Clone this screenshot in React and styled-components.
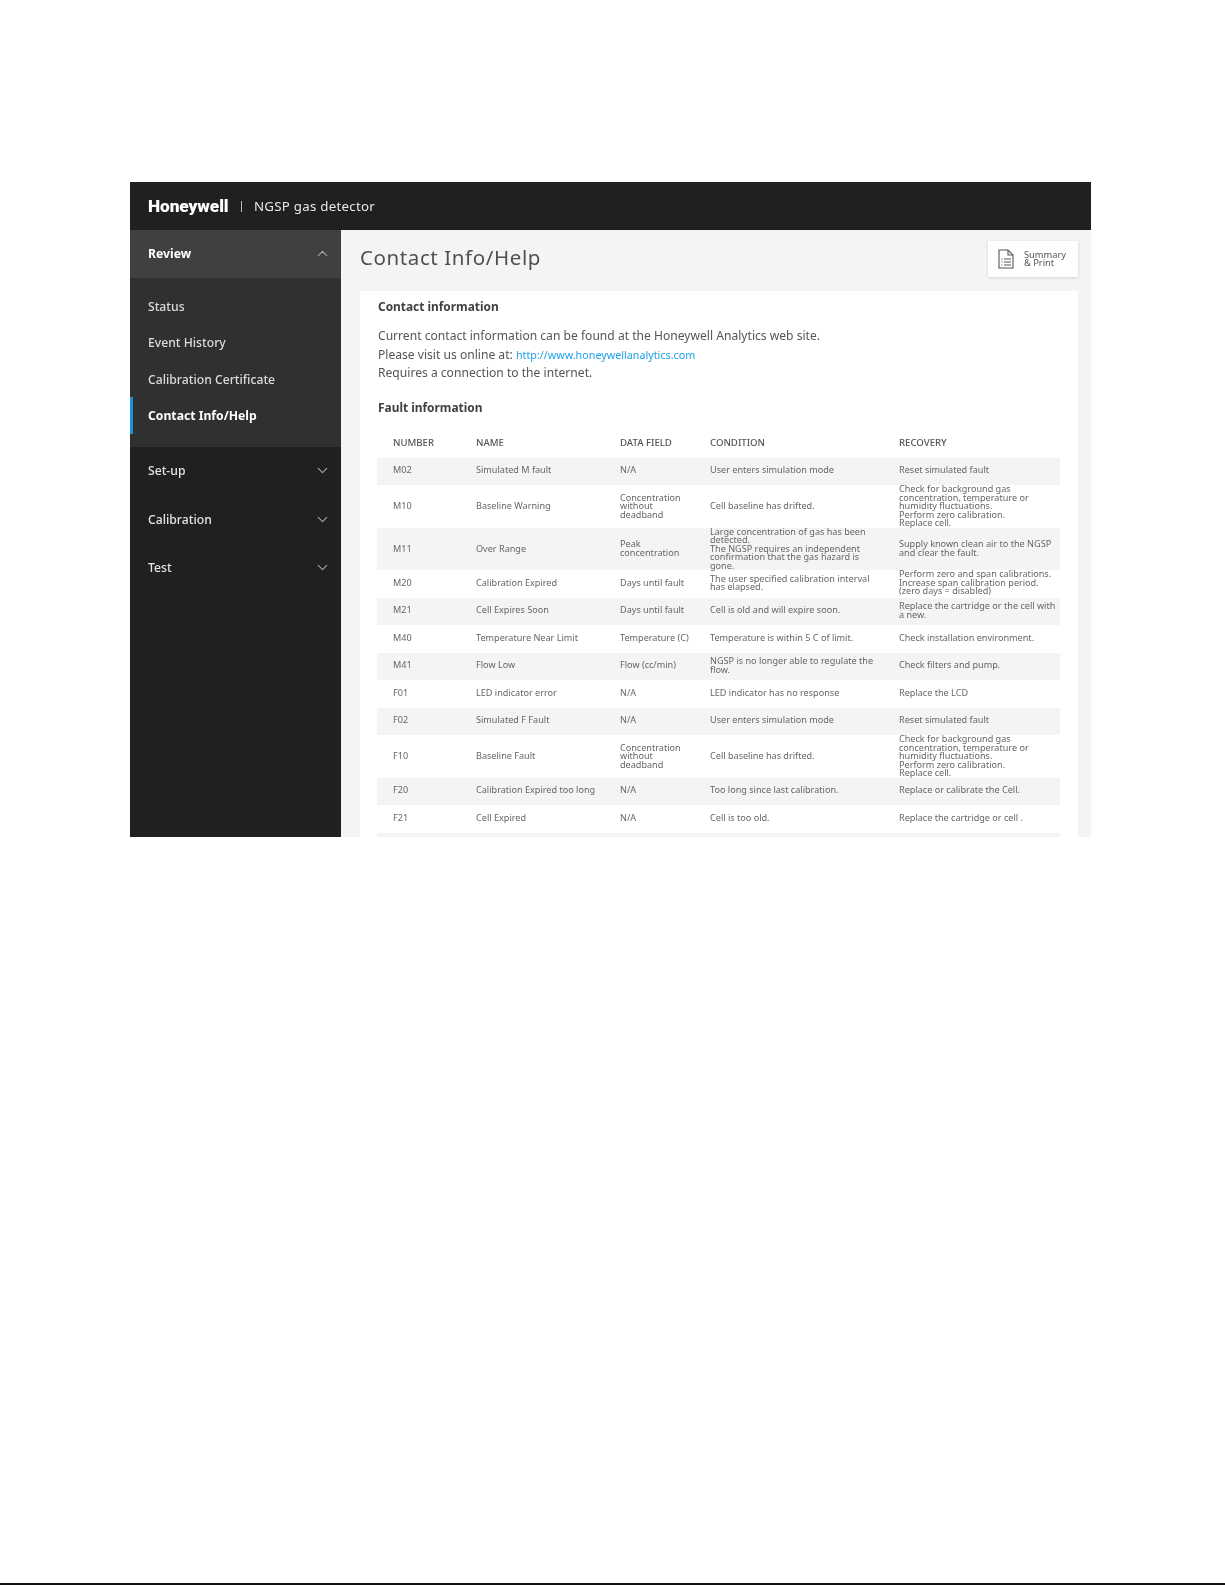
import React from "react";
import styled, { createGlobalStyle } from "styled-components";
import { ChevronDown, ChevronUp } from "lucide-react";

const Global = createGlobalStyle`
  html, body { margin: 0; padding: 0; background: #fff; }
  * { box-sizing: border-box; }
`;

const Page = styled.div`
  height: 1585px;
  padding-top: 182px;
  display: flex;
  flex-direction: column;
  justify-content: space-between;
  font-family: "Noto Sans", "Open Sans", sans-serif;
`;

const Window = styled.div`
  width: 961px;
  height: 655px;
  margin-left: 130px;
  overflow: hidden;
  display: flex;
  flex-direction: column;
  background: #f4f4f4;
  filter: blur(0.5px);
`;

const Footer = styled.div`
  height: 2px;
  background: #111;
`;

const Header = styled.header`
  height: 48px;
  flex: none;
  background: #202020;
  display: flex;
  align-items: center;
  padding-left: 18px;
  color: #e8e8e8;
`;

const Logo = styled.span`
  font-family: "Roboto", "Liberation Sans", sans-serif;
  font-weight: 900;
  font-size: 17.3px;
  letter-spacing: -0.1px;
  color: #fff;
  width: 93px;
`;

const Divider = styled.span`
  width: 1px;
  height: 11px;
  background: #bbb;
  margin-right: 12px;
`;

const Product = styled.span`
  font-size: 13.3px;
  letter-spacing: 0.25px;
  padding-bottom: 1px;
`;

const Body = styled.div`
  flex: 1;
  display: flex;
  min-height: 0;
`;

const Side = styled.nav`
  width: 211px;
  flex: none;
  background: #202020;
  display: flex;
  flex-direction: column;
`;

const SideHead = styled.div`
  height: ${p => (p.$open ? "48px" : "48.5px")};
  flex: none;
  display: flex;
  align-items: center;
  justify-content: space-between;
  padding: 0 10px ${p => (p.$open ? "2px" : "1px")} 18px;
  background: ${p => (p.$open ? "#404040" : "transparent")};
  color: ${p => (p.$open ? "#fff" : "#e4e4e4")};
  font-size: 12.2px;
  font-weight: ${p => (p.$open ? 700 : 500)};
  svg { color: #a8a8a8; }
`;

const SubMenu = styled.div`
  height: 169px;
  flex: none;
  background: #303030;
  padding-top: 10.5px;
`;

const SubItem = styled.div`
  height: 36.3px;
  display: flex;
  align-items: center;
  padding-left: ${p => (p.$active ? "15px" : "18px")};
  font-size: 12.2px;
  font-weight: ${p => (p.$active ? 700 : 500)};
  color: ${p => (p.$active ? "#fff" : "#dcdcdc")};
  border-left: ${p => (p.$active ? "3px solid #1792e5" : "none")};
`;

const Main = styled.main`
  flex: 1;
  min-width: 0;
  padding: 11px 13px 0 19px;
`;

const TitleRow = styled.div`
  height: 36px;
  display: flex;
  justify-content: space-between;
  align-items: center;
  margin-bottom: 14px;
`;

const Title = styled.h1`
  margin: 0 0 5px;
  font-size: 20.5px;
  font-weight: 400;
  letter-spacing: 0.6px;
  color: #505050;
`;

const PrintButton = styled.div`
  width: 90px;
  height: 36px;
  background: #fff;
  box-shadow: 0 1px 3px rgba(0, 0, 0, 0.14);
  display: flex;
  align-items: center;
  padding-left: 10px;
  gap: 10px;
  color: #555;
`;

const PrintLabel = styled.div`
  font-size: 9.3px;
  line-height: 8.5px;
`;

const Panel = styled.section`
  background: #fff;
  padding: 7px 18px 0 17px;
`;

const Heading = styled.h2`
  margin: ${p => (p.$second ? "16.5px" : "0")} 0 ${p => (p.$second ? "14px" : "12px")} 1px;
  font-size: 11.9px;
  line-height: 17px;
  font-weight: 700;
  color: #404040;
`;

const Para = styled.div`
  margin-left: 1px;
  font-size: 12.1px;
  line-height: 18.5px;
  color: #555;
`;

const Link = styled.span`
  color: #1da0e8;
  font-size: 10.75px;
`;

const Row = styled.div`
  display: grid;
  grid-template-columns: 83px 144px 90px 189px 1fr;
  height: ${p => (p.$tall ? "42.5px" : "27.5px")};
  padding-left: 16px;
  background: ${p => (p.$shade ? "#f4f4f4" : "#fff")};
`;

const Cell = styled.div`
  display: flex;
  align-items: center;
  font-size: 9.1px;
  line-height: 8.5px;
  color: #666;
  padding-bottom: 1.5px;
  white-space: pre-line;
`;

const HeadCell = styled(Cell)`
  font-size: 9.6px;
  font-weight: 500;
  color: #555;
  padding-bottom: 1px;
`;

const rows = [
  ["M02", "Simulated M fault", "N/A", "User enters simulation mode", "Reset simulated fault"],
  ["M10", "Baseline Warning", "Concentration\nwithout\ndeadband", "Cell baseline has drifted.", "Check for background gas\nconcentration, temperature or\nhumidity fluctuations.\nPerform zero calibration.\nReplace cell.", true],
  ["M11", "Over Range", "Peak\nconcentration", "Large concentration of gas has been\ndetected.\nThe NGSP requires an independent\nconfirmation that the gas hazard is\ngone.", "Supply known clean air to the NGSP\nand clear the fault.", true],
  ["M20", "Calibration Expired", "Days until fault", "The user specified calibration interval\nhas elapsed.", "Perform zero and span calibrations.\nIncrease span calibration period.\n(zero days = disabled)"],
  ["M21", "Cell Expires Soon", "Days until fault", "Cell is old and will expire soon.", "Replace the cartridge or the cell with\na new."],
  ["M40", "Temperature Near Limit", "Temperature (C)", "Temperature is within 5 C of limit.", "Check installation environment."],
  ["M41", "Flow Low", "Flow (cc/min)", "NGSP is no longer able to regulate the\nflow.", "Check filters and pump."],
  ["F01", "LED indicator error", "N/A", "LED indicator has no response", "Replace the LCD"],
  ["F02", "Simulated F Fault", "N/A", "User enters simulation mode", "Reset simulated fault"],
  ["F10", "Baseline Fault", "Concentration\nwithout\ndeadband", "Cell baseline has drifted.", "Check for background gas\nconcentration, temperature or\nhumidity fluctuations.\nPerform zero calibration.\nReplace cell.", true],
  ["F20", "Calibration Expired too long", "N/A", "Too long since last calibration.", "Replace or calibrate the Cell."],
  ["F21", "Cell Expired", "N/A", "Cell is too old.", "Replace the cartridge or cell ."],
  ["", "", "", "", ""],
];

const DocIcon = () => (
  <svg width="16" height="20" viewBox="0 0 16 20" fill="none" stroke="#555" strokeWidth="1.1">
    <path d="M1 1h9l5 5v13H1z" />
    <path d="M10 1v5h5" />
    <path d="M3.5 10h1M6 10h7M3.5 13h1M6 13h7M3.5 16h1M6 16h7" />
  </svg>
);

export default function App() {
  return (
    <Page>
      <Global />
      <Window>
        <Header>
          <Logo>Honeywell</Logo>
          <Divider />
          <Product>NGSP gas detector</Product>
        </Header>
        <Body>
          <Side>
            <SideHead $open>Review<ChevronUp size={17} strokeWidth={1.5} /></SideHead>
            <SubMenu>
              <SubItem>Status</SubItem>
              <SubItem>Event History</SubItem>
              <SubItem>Calibration Certificate</SubItem>
              <SubItem $active>Contact Info/Help</SubItem>
            </SubMenu>
            <SideHead>Set-up<ChevronDown size={17} strokeWidth={1.5} /></SideHead>
            <SideHead>Calibration<ChevronDown size={17} strokeWidth={1.5} /></SideHead>
            <SideHead>Test<ChevronDown size={17} strokeWidth={1.5} /></SideHead>
          </Side>
          <Main>
            <TitleRow>
              <Title>Contact Info/Help</Title>
              <PrintButton>
                <DocIcon />
                <PrintLabel>Summary<br />&amp; Print</PrintLabel>
              </PrintButton>
            </TitleRow>
            <Panel>
              <Heading>Contact information</Heading>
              <Para>Current contact information can be found at the Honeywell Analytics web site.</Para>
              <Para>Please visit us online at: <Link>http://www.honeywellanalytics.com</Link></Para>
              <Para>Requires a connection to the internet.</Para>
              <Heading $second>Fault information</Heading>
              <Row>
                <HeadCell>NUMBER</HeadCell>
                <HeadCell>NAME</HeadCell>
                <HeadCell>DATA FIELD</HeadCell>
                <HeadCell>CONDITION</HeadCell>
                <HeadCell>RECOVERY</HeadCell>
              </Row>
              {rows.map((r, i) => (
                <Row key={i} $tall={r[5]} $shade={i % 2 === 0}>
                  {r.slice(0, 5).map((c, j) => <Cell key={j}>{c}</Cell>)}
                </Row>
              ))}
            </Panel>
          </Main>
        </Body>
      </Window>
      <Footer />
    </Page>
  );
}
